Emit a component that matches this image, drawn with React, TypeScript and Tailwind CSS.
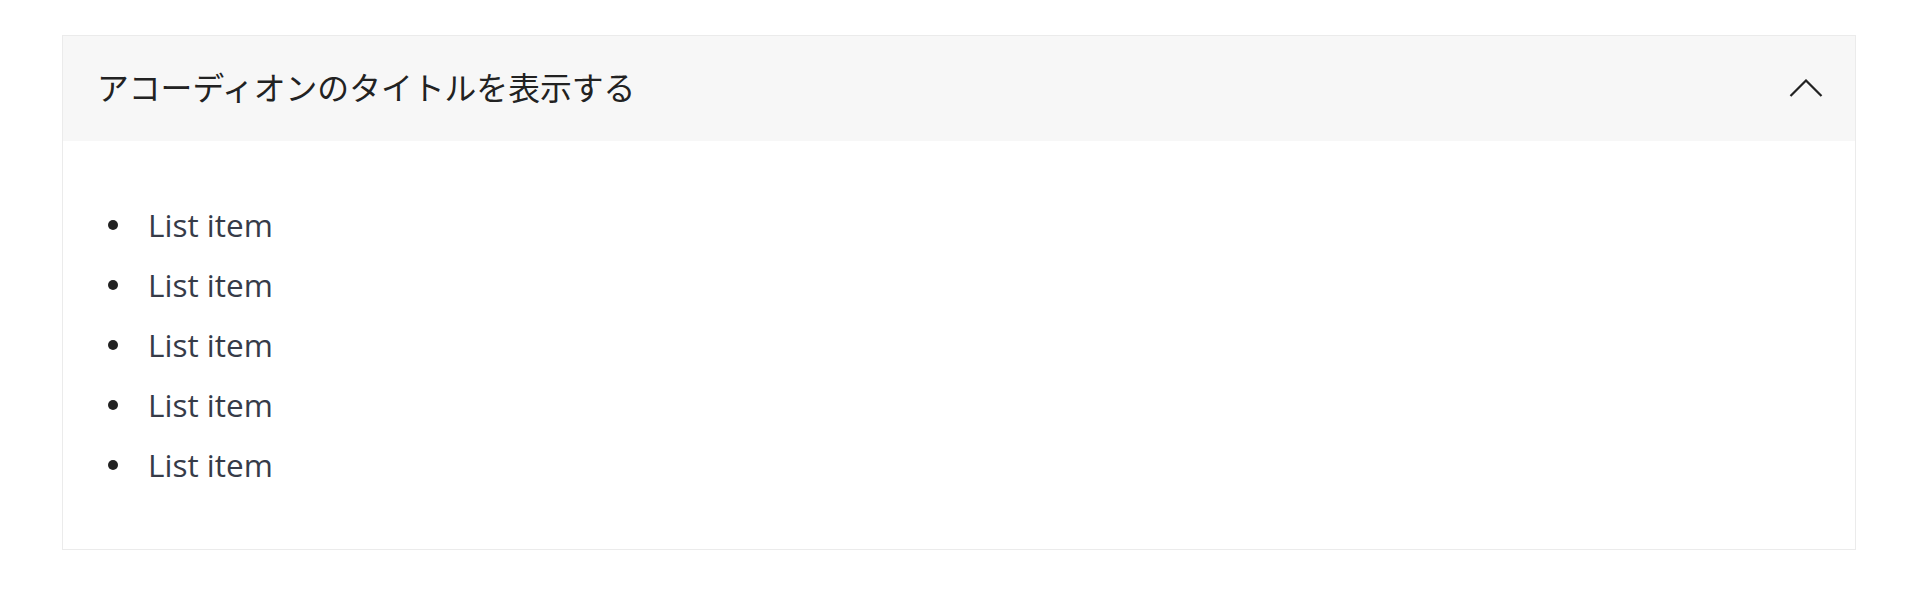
import { useState } from "react";

const items = ["List item", "List item", "List item", "List item", "List item"];

function Chevron({ open }: { open: boolean }) {
  return (
    <svg
      width="34"
      height="19"
      viewBox="0 0 34 19"
      className={open ? "" : "rotate-180"}
    >
      <polyline
        points="1.5,17 17,1.5 32.5,17"
        fill="none"
        stroke="#222222"
        strokeWidth="2.2"
      />
    </svg>
  );
}

export default function App() {
  const [open, setOpen] = useState(true);

  return (
    <div className="min-h-[602px] bg-white px-[62px] pt-[35px]">
      <div className="border border-[#ebebeb]">
        {/* accordion header */}
        <button
          onClick={() => setOpen(!open)}
          className="flex h-[105px] w-full items-center justify-between bg-[#f7f7f7] pl-[34px] pr-[32px] text-left"
        >
          <span className="pb-[4px] font-['Noto_Sans_CJK_JP',sans-serif] text-[31.8px] font-normal text-[#222222]">
            アコーディオンのタイトルを表示する
          </span>
          <Chevron open={open} />
        </button>

        {/* accordion body */}
        {open && (
          <ul className="py-[54px] pl-[45px]">
            {items.map((item, i) => (
              <li key={i} className="flex h-[60px] items-center">
                <span className="h-[10px] w-[10px] rounded-full bg-[#222222]" />
                <span className="ml-[30px] font-['Open_Sans',sans-serif] text-[31.5px] text-[#363b48]">
                  {item}
                </span>
              </li>
            ))}
          </ul>
        )}
      </div>
    </div>
  );
}
